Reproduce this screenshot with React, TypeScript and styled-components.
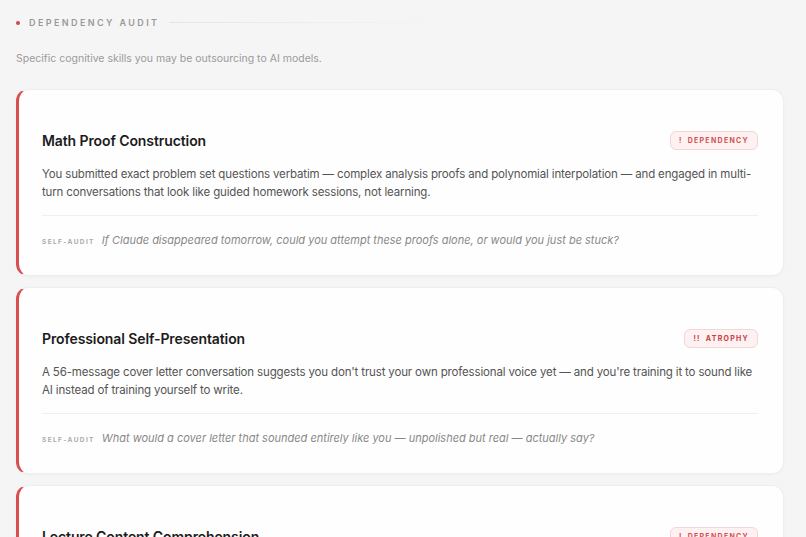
import React from 'react';
import styled, { createGlobalStyle } from 'styled-components';

const GlobalStyle = createGlobalStyle`
  * { box-sizing: border-box; }
  body {
    margin: 0;
    background: #f6f5f5;
    font-family: Inter, "Noto Sans", "Liberation Sans", sans-serif;
    -webkit-font-smoothing: antialiased;
  }
`;

type Level = 'dependency' | 'atrophy';

interface Skill {
  title: string;
  level: Level;
  body: string;
  question: string;
}

const skills: Skill[] = [
  {
    title: 'Math Proof Construction',
    level: 'dependency',
    body:
      'You submitted exact problem set questions verbatim — complex analysis proofs and polynomial interpolation — and engaged in multi-turn conversations that look like guided homework sessions, not learning.',
    question:
      'If Claude disappeared tomorrow, could you attempt these proofs alone, or would you just be stuck?',
  },
  {
    title: 'Professional Self-Presentation',
    level: 'atrophy',
    body:
      "A 56-message cover letter conversation suggests you don't trust your own professional voice yet — and you're training it to sound like AI instead of training yourself to write.",
    question:
      'What would a cover letter that sounded entirely like you — unpolished but real — actually say?',
  },
  {
    title: 'Lecture Content Comprehension',
    level: 'dependency',
    body:
      'You pasted lecture notes and asked for summaries instead of working through the material yourself first.',
    question: 'Could you explain last week’s lecture to a friend without looking anything up?',
  },
];

const Page = styled.main`
  padding: 16px 22px 24px 16px;
`;

const SectionHeader = styled.div`
  display: flex;
  align-items: center;
  height: 13px;
`;

const Dot = styled.span`
  width: 4px;
  height: 4px;
  border-radius: 50%;
  background: #d04848;
  margin-right: 9px;
`;

const SectionLabel = styled.h2`
  margin: 0;
  font-size: 9px;
  font-weight: 600;
  letter-spacing: 2.4px;
  color: #9a9898;
  text-transform: uppercase;
`;

const Rule = styled.span`
  flex: 1;
  height: 1px;
  margin-left: 10px;
  background: linear-gradient(to right, #e6e4e4, rgba(230, 228, 228, 0) 45%);
`;

const Intro = styled.p`
  margin: 22px 0 0;
  font-size: 10.5px;
  color: #9c9a9a;
  line-height: 16px;
`;

const List = styled.div`
  display: flex;
  flex-direction: column;
  gap: 11px;
  margin-top: 22px;
`;

const Card = styled.article`
  background: #fefefe;
  border: 1px solid #efeded;
  border-left: 3px solid #d65050;
  border-radius: 12px;
  padding: 40px 25px 24px 23px;
  box-shadow: 0 1px 3px rgba(0, 0, 0, 0.03);
`;

const CardHead = styled.div`
  display: flex;
  align-items: center;
  justify-content: space-between;
  height: 20px;
`;

const Title = styled.h3`
  margin: 0;
  font-size: 14px;
  font-weight: 600;
  color: #1c1b1b;
  letter-spacing: -0.1px;
`;

const Badge = styled.span<{ $level: Level }>`
  display: inline-flex;
  align-items: center;
  gap: 5px;
  height: 19px;
  padding: 0 8px;
  border-radius: 6px;
  border: 1px solid #f4d6d6;
  background: #fdf1f1;
  color: ${({ $level }) => ($level === 'atrophy' ? '#c83c3c' : '#d45050')};
  font-size: 7px;
  font-weight: 700;
  letter-spacing: 1.3px;
  text-transform: uppercase;
`;

const Body = styled.p`
  margin: 15px 0 0;
  font-size: 11.5px;
  letter-spacing: -0.15px;
  line-height: 18px;
  color: #555353;
`;

const Divider = styled.hr`
  margin: 14px 0 0;
  border: none;
  height: 1px;
  background: #f0eeee;
`;

const AuditRow = styled.div`
  display: flex;
  align-items: baseline;
  gap: 7px;
  margin-top: 15px;
  line-height: 18px;
`;

const AuditLabel = styled.span`
  font-size: 6.5px;
  font-weight: 700;
  letter-spacing: 1.4px;
  color: #acaaaa;
  text-transform: uppercase;
  white-space: nowrap;
`;

const Question = styled.span`
  font-size: 11px;
  font-style: italic;
  color: #8a8888;
`;

const badgeText: Record<Level, string> = {
  dependency: '!',
  atrophy: '!!',
};

const SkillCard: React.FC<{ skill: Skill }> = ({ skill }) => (
  <Card>
    <CardHead>
      <Title>{skill.title}</Title>
      <Badge $level={skill.level}>
        <span>{badgeText[skill.level]}</span>
        {skill.level}
      </Badge>
    </CardHead>
    <Body>{skill.body}</Body>
    <Divider />
    <AuditRow>
      <AuditLabel>Self-audit</AuditLabel>
      <Question>{skill.question}</Question>
    </AuditRow>
  </Card>
);

export default function App() {
  return (
    <>
      <GlobalStyle />
      <Page>
        <SectionHeader>
          <Dot />
          <SectionLabel>Dependency Audit</SectionLabel>
          <Rule />
        </SectionHeader>
        <Intro>Specific cognitive skills you may be outsourcing to AI models.</Intro>
        <List>
          {skills.map((skill) => (
            <SkillCard key={skill.title} skill={skill} />
          ))}
        </List>
      </Page>
    </>
  );
}
